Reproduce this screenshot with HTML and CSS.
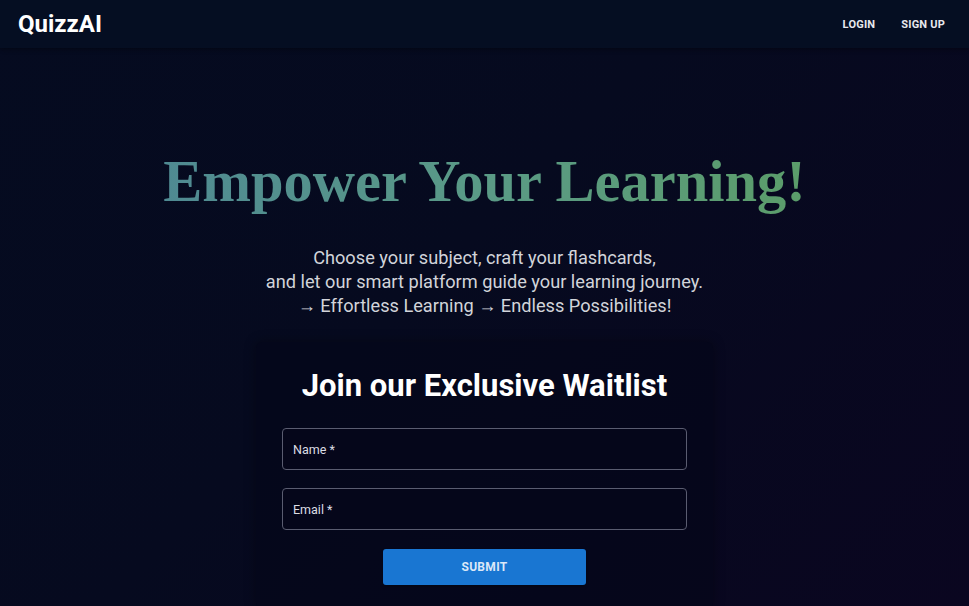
FILE: index.html
```html
<!DOCTYPE html>
<html lang="en">
<head>
<meta charset="utf-8">
<title>QuizzAI</title>
<link rel="stylesheet" href="styles.css">
</head>
<body>
<header class="topbar">
  <div class="logo">QuizzAI</div>
  <nav class="nav">
    <a class="nav-link" href="#">LOGIN</a>
    <a class="nav-link" href="#">SIGN UP</a>
  </nav>
</header>
<main class="hero">
  <h1 class="title">Empower Your Learning!</h1>
  <p class="subtitle">Choose your subject, craft your flashcards,<br>and let our smart platform guide your learning journey.<br>&rarr; Effortless Learning &rarr; Endless Possibilities!</p>
  <section class="card">
    <h2 class="card-title">Join our Exclusive Waitlist</h2>
    <form class="form">
      <label class="field"><span class="field-label">Name *</span></label>
      <label class="field"><span class="field-label">Email *</span></label>
      <button class="submit" type="button">SUBMIT</button>
    </form>
  </section>
</main>
</body>
</html>
```
FILE: styles.css
```css
* { box-sizing: border-box; }
html, body { margin: 0; height: 100%; }
body {
  font-family: Roboto, "Liberation Sans", sans-serif;
  background: linear-gradient(135deg, #050b20 0%, #060a1f 45%, #0a0620 100%);
  color: #fff;
  overflow: hidden;
}
.topbar {
  height: 48px;
  background: #050e22;
  display: flex;
  align-items: center;
  justify-content: space-between;
  padding: 0 24px 0 18px;
  box-shadow: 0 2px 4px rgba(0,0,0,0.3);
}
.logo {
  font-size: 24px;
  font-weight: 700;
  color: #fff;
}
.nav { display: flex; gap: 26px; }
.nav-link {
  color: #e8e8ee;
  text-decoration: none;
  font-size: 11px;
  font-weight: 700;
  letter-spacing: 0.2px;
}
.hero {
  display: flex;
  flex-direction: column;
  align-items: center;
  padding-top: 99px;
}
.title {
  margin: 0;
  font-family: "Liberation Serif", "Times New Roman", serif;
  font-weight: 700;
  font-size: 58.5px;
  line-height: 70px;
  background: linear-gradient(90deg, #4f8a92 0%, #5a9a86 50%, #5b9d6a 100%);
  -webkit-background-clip: text;
  background-clip: text;
  color: transparent;
}
.subtitle {
  margin: 29px 0 0;
  text-align: center;
  font-size: 18.2px;
  line-height: 24px;
  color: #d2d4da;
}
.card {
  margin-top: 24px;
  width: 457px;
  padding: 25px 26px 24px;
  background: rgba(4, 6, 24, 0.55);
  border-radius: 6px;
  box-shadow: 0 0 12px rgba(0,0,0,0.35);
  display: flex;
  flex-direction: column;
  align-items: center;
}
.card-title {
  margin: 0;
  font-size: 31px;
  font-weight: 700;
  line-height: 38px;
  color: #fff;
}
.form {
  margin-top: 23px;
  width: 100%;
  display: flex;
  flex-direction: column;
  align-items: center;
  gap: 18px;
}
.field {
  width: 100%;
  height: 42px;
  border: 1px solid #5a5c70;
  border-radius: 4px;
  display: flex;
  align-items: center;
  padding: 0 10px;
  background: #05061a;
}
.field-label {
  font-size: 12.5px;
  color: #dcdde4;
}
.submit {
  margin-top: 1px;
  width: 203px;
  height: 36px;
  border: 0;
  border-radius: 3px;
  background: #1976d2;
  color: #dbe8f8;
  font-family: Roboto, "Liberation Sans", sans-serif;
  font-size: 12px;
  font-weight: 700;
  letter-spacing: 0.3px;
  box-shadow: 0 2px 3px rgba(0,0,0,0.3);
}
```
